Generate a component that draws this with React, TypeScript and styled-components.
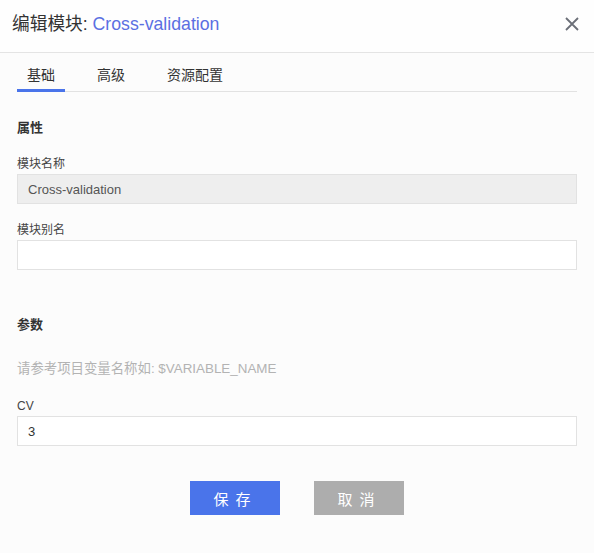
import React, { useState } from 'react'
import styled, { createGlobalStyle } from 'styled-components'

const GlobalStyle = createGlobalStyle`
  html, body {
    margin: 0;
    padding: 0;
    background: #fcfcfc;
  }
  * {
    box-sizing: border-box;
  }
`

const Dialog = styled.div`
  width: 594px;
  height: 553px;
  background: #fcfcfc;
  font-family: "Liberation Sans", "Noto Sans CJK SC", sans-serif;
  color: #333;
`

const Header = styled.div`
  height: 53px;
  padding: 0 15px 5px 12px;
  display: flex;
  align-items: center;
  justify-content: space-between;
  border-bottom: 1px solid #e4e4e4;
  background: #fefefe;
`

const Title = styled.div`
  font-size: 17.7px;
  line-height: 24px;
  color: #333;
  span {
    color: #5b6fe2;
  }
`

const CloseButton = styled.button`
  appearance: none;
  border: none;
  background: none;
  padding: 0;
  width: 14px;
  height: 14px;
  display: flex;
  cursor: pointer;
`

const TabBar = styled.div`
  display: flex;
  margin: 0 17px;
  padding-top: 12px;
  border-bottom: 1px solid #e2e2e2;
`

const Tab = styled.div<{ $active?: boolean }>`
  padding: 0 10px 4px;
  margin-right: 22px;
  margin-bottom: -1px;
  font-size: 14px;
  line-height: 20px;
  color: #333;
  border-bottom: 3px solid ${(p) => (p.$active ? '#4a74ea' : 'transparent')};
  cursor: pointer;
`

const Body = styled.div`
  padding: 0 17px;
`

const SectionTitle = styled.div<{ $top: number }>`
  margin-top: ${(p) => p.$top}px;
  font-size: 13px;
  line-height: 20px;
  font-weight: bold;
  color: #333;
`

const Field = styled.div<{ $top: number }>`
  margin-top: ${(p) => p.$top}px;
`

const Label = styled.div`
  font-size: 12px;
  line-height: 18px;
  color: #444;
  margin-bottom: 1px;
`

const Input = styled.input`
  display: block;
  width: 100%;
  height: 30px;
  padding: 0 10px;
  border: 1px solid #e2e2e2;
  background: #fff;
  font-family: inherit;
  font-size: 13px;
  color: #333;
  outline: none;
  &:disabled {
    background: #eeeeee;
    color: #555;
  }
`

const Hint = styled.div`
  margin-top: 24px;
  font-size: 13.4px;
  line-height: 20px;
  color: #b3b3b3;
`

const Footer = styled.div`
  display: flex;
  justify-content: center;
  gap: 34px;
  margin-top: 35px;
`

const Button = styled.button<{ $primary?: boolean }>`
  appearance: none;
  border: none;
  width: 90px;
  height: 34px;
  background: ${(p) => (p.$primary ? '#4a74ea' : '#adadad')};
  color: #fff;
  font-family: inherit;
  font-size: 15px;
  letter-spacing: 7px;
  padding-left: 7px;
  cursor: pointer;
`

const tabs = ['基础', '高级', '资源配置']

export default function App() {
  const [active, setActive] = useState(0)
  const [alias, setAlias] = useState('')
  const [cv, setCv] = useState('3')

  return (
    <Dialog>
      <GlobalStyle />
      <Header>
        <Title>
          编辑模块: <span>Cross-validation</span>
        </Title>
        <CloseButton aria-label="close">
          <svg width="14" height="14" viewBox="0 0 14 14">
            <path d="M1 1 L13 13 M13 1 L1 13" stroke="#6b6f78" strokeWidth="1.8" fill="none" />
          </svg>
        </CloseButton>
      </Header>
      <TabBar>
        {tabs.map((t, i) => (
          <Tab key={t} $active={i === active} onClick={() => setActive(i)}>
            {t}
          </Tab>
        ))}
      </TabBar>
      <Body>
        <SectionTitle $top={26}>属性</SectionTitle>
        <Field $top={17}>
          <Label>模块名称</Label>
          <Input value="Cross-validation" disabled readOnly />
        </Field>
        <Field $top={17}>
          <Label>模块别名</Label>
          <Input value={alias} onChange={(e) => setAlias(e.target.value)} />
        </Field>
        <SectionTitle $top={45}>参数</SectionTitle>
        <Hint>请参考项目变量名称如: $VARIABLE_NAME</Hint>
        <Field $top={18}>
          <Label>CV</Label>
          <Input value={cv} onChange={(e) => setCv(e.target.value)} />
        </Field>
        <Footer>
          <Button $primary>保存</Button>
          <Button>取消</Button>
        </Footer>
      </Body>
    </Dialog>
  )
}
